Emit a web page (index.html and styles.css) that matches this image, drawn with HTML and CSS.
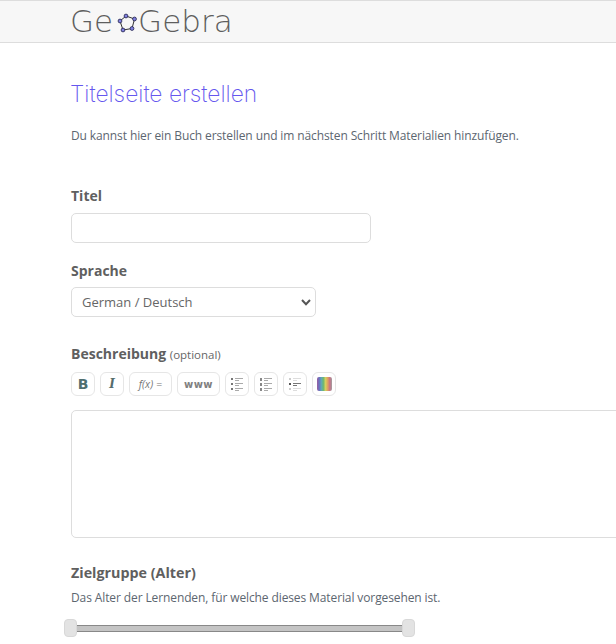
FILE: index.html
```html
<!DOCTYPE html>
<html lang="de">
<head>
<meta charset="utf-8">
<title>Titelseite erstellen</title>
<link rel="stylesheet" href="styles.css">
</head>
<body>
<header class="topbar">
  <div class="logo">
    <span>Ge</span>
    <svg class="logo-mark" width="21" height="20" viewBox="0 0 21 20" aria-hidden="true">
      <path d="M9 3 L17.5 6 L15 15.5 L6 17 L3 8 Z" fill="none" stroke="#333" stroke-width="1"/>
      <g fill="#8080e0" stroke="#22224a" stroke-width="0.8">
        <circle cx="9" cy="3" r="1.9"/><circle cx="17.5" cy="6" r="1.9"/><circle cx="15" cy="15.5" r="1.9"/><circle cx="6" cy="17" r="1.9"/><circle cx="3" cy="8" r="1.9"/>
      </g>
    </svg>
    <span>Gebra</span>
  </div>
</header>
<main class="content">
  <h1 class="title">Titelseite erstellen</h1>
  <p class="intro">Du kannst hier ein Buch erstellen und im nächsten Schritt Materialien hinzufügen.</p>

  <label class="label label-title">Titel</label>
  <input class="field field-title" type="text">

  <label class="label label-lang">Sprache</label>
  <div class="field field-select">
    <span>German / Deutsch</span>
    <svg width="10" height="7" viewBox="0 0 10 7" aria-hidden="true"><path d="M1 1 L5 5.2 L9 1" fill="none" stroke="#555" stroke-width="2"/></svg>
  </div>

  <div class="label label-desc">Beschreibung <small class="optional">(optional)</small></div>
  <div class="toolbar">
    <button class="tool tool-b">B</button>
    <button class="tool tool-i">I</button>
    <button class="tool tool-fx"><i>f(x)</i> =</button>
    <button class="tool tool-www">www</button>
    <button class="tool"><svg width="12" height="13" viewBox="0 0 12 13"><path d="M0 0h2v2H0zM0 5h2v2H0zM0 10h2v2H0z" fill="#777"/><path d="M4 .5h8M4 2.5h4M4 5.5h8M4 7.5h4M4 10.5h8M4 12.5h4" stroke="#aaa" fill="none"/></svg></button>
    <button class="tool"><svg width="12" height="13" viewBox="0 0 12 13"><path d="M0 0h2v3H0zM0 5h2v3H0zM0 10h2v3H0z" fill="#888"/><path d="M4 .5h8M4 2.5h4M4 5.5h8M4 7.5h4M4 10.5h8M4 12.5h4" stroke="#aaa" fill="none"/></svg></button>
    <button class="tool"><svg width="12" height="13" viewBox="0 0 12 13"><path d="M0 0h2v2H0zM0 10h2v2H0z" fill="#ccc"/><path d="M0 5h2v2H0z" fill="#555"/><path d="M4 .5h8M4 2.5h4M4 10.5h8M4 12.5h4" stroke="#ddd" fill="none"/><path d="M4 5.5h8M4 7.5h4" stroke="#777" fill="none"/></svg></button>
    <button class="tool"><span class="swatch"></span></button>
  </div>
  <div class="editor"></div>

  <div class="label label-age">Zielgruppe (Alter)</div>
  <p class="hint">Das Alter der Lernenden, für welche dieses Material vorgesehen ist.</p>
  <div class="slider">
    <span class="knob"></span>
    <span class="track"></span>
    <span class="knob"></span>
  </div>
</main>
</body>
</html>
```
FILE: styles.css
```css
* { box-sizing: border-box; }
html, body { margin: 0; height: 644px; overflow: hidden; background: #fff; }
body { font-family: "Open Sans", "Liberation Sans", sans-serif; color: #5a5a5a; font-size: 12px; }
.topbar { height: 43px; background: #f7f7f7; border-top: 1px solid #ddd; border-bottom: 1px solid #ddd; padding-left: 70px; }
.logo { display: flex; align-items: center; height: 41px; font-family: "DejaVu Sans", Inter, sans-serif; font-weight: 200; font-size: 31px; color: #5e5e5e; line-height: 1; }
.logo-mark { margin: 2px 0 0 4px; }
.content { width: 700px; padding-left: 71px; }
.title { margin: 35px 0 0 -1px; height: 32px; font-family: Inter, sans-serif; font-weight: 200; font-size: 22.8px; line-height: 32px; color: #6557ee; }
.intro { margin: 17px 0 0; height: 18px; line-height: 18px; font-size: 12px; letter-spacing: -0.11px; color: #5c6670; }
.label { display: block; font-weight: 700; font-size: 14px; line-height: 19px; color: #5f5f5f; }
.label-title { margin-top: 41px; }
.field { display: block; border: 1px solid #ddd; border-radius: 5px; background: #fff; }
.field-title { width: 300px; height: 30px; margin-top: 8px; padding: 0; }
.label-lang { margin-top: 18px; }
.field-select { display: flex; align-items: center; justify-content: space-between; width: 245px; height: 30px; margin-top: 7px; padding: 0 4px 0 10px; font-size: 13px; color: #666; }
.label-desc { margin-top: 27px; }
.optional { font-weight: 400; font-size: 11.5px; color: #666; }
.toolbar { display: flex; gap: 5px; margin-top: 8px; }
.tool { display: flex; align-items: center; justify-content: center; min-width: 24px; height: 24px; padding: 0; border: 1px solid #e6e6e6; border-radius: 6px; background: #fff; color: #777; font-family: "Open Sans", sans-serif; font-size: 10px; }
.tool-b { font-family: "DejaVu Sans", sans-serif; font-weight: 700; font-size: 14px; color: #4f6f70; }
.tool-i { font-family: "DejaVu Serif", serif; font-weight: 700; font-style: italic; font-size: 12px; color: #556c6c; }
.tool-fx { width: 43px; font-size: 10.5px; gap: 3px; }
.tool-www { width: 43px; font-family: "DejaVu Sans", sans-serif; font-weight: 700; font-size: 10px; letter-spacing: 0.5px; color: #808080; }
.swatch { display: block; width: 15px; height: 14px; border-radius: 2px; background: linear-gradient(90deg, #9a5fa0, #6a70c0, #5fa8b8, #70b870, #d8d060, #e0a060, #c87088, #a0a0a0); }
.editor { width: 700px; height: 128px; margin-top: 14px; border: 1px solid #ddd; border-radius: 5px; }
.label-age { font-size: 14.3px; margin-top: 25px; }
.hint { margin: 7px 0 0; height: 18px; line-height: 18px; font-size: 12px; letter-spacing: -0.11px; color: #5c6670; }
.slider { display: flex; align-items: center; width: 351px; height: 18px; margin-top: 12px; margin-left: -7px; }
.knob { width: 13px; height: 18px; flex: none; background: #e3e3e3; border: 1px solid #d8d8d8; border-radius: 4px; }
.track { flex: 1; height: 7px; background: #c4c4c4; border-top: 1px solid #888; border-bottom: 1px solid #888; }
```
